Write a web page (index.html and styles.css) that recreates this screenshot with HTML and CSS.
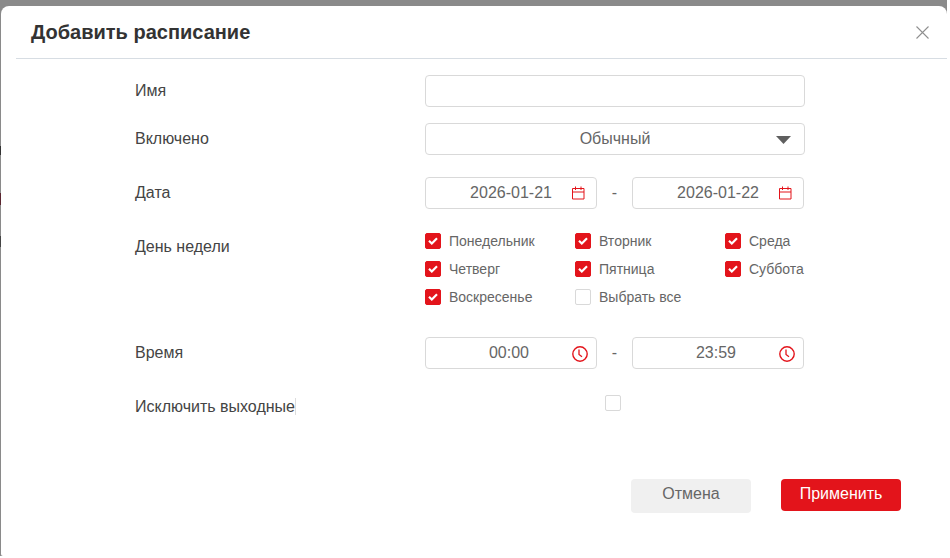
FILE: index.html
```html
<!DOCTYPE html>
<html lang="ru">
<head>
<meta charset="utf-8">
<title>Добавить расписание</title>
<link rel="stylesheet" href="styles.css">
</head>
<body>
<div class="page">
  <span class="peek peek-a"></span>
  <span class="peek peek-b"></span>
  <span class="peek peek-c"></span>
  <section class="dialog">
    <header class="dialog-head">
      <h1 class="dialog-title">Добавить расписание</h1>
      <svg class="close" width="13" height="13" viewBox="0 0 13 13"><path d="M.5.5l12 12M12.5.5l-12 12" stroke="#8f8f8f" stroke-width="1.1" fill="none"/></svg>
    </header>
    <div class="form">
      <div class="row row-name">
        <label class="label">Имя</label>
        <div class="control"><div class="field field-full"></div></div>
      </div>
      <div class="row row-enabled">
        <label class="label">Включено</label>
        <div class="control">
          <div class="field field-full field-select">
            <span class="value">Обычный</span>
            <svg class="caret" width="15" height="8" viewBox="0 0 15 8"><path d="M0 0h15L7.500 8z" fill="#5f5f5f"/></svg>
          </div>
        </div>
      </div>
      <div class="row row-date">
        <label class="label">Дата</label>
        <div class="control pair">
          <div class="field field-half">
            <span class="value">2026-01-21</span>
            <svg class="icon" width="14" height="14" viewBox="0 0 14 14"><path d="M1.500 2.500h11.500v10.500h-11.500zM1.500 6h11.500M4.500 .5v3.500M10 .5v3.500" stroke="#e3141b" fill="none"/></svg>
          </div>
          <span class="dash">-</span>
          <div class="field field-half">
            <span class="value">2026-01-22</span>
            <svg class="icon" width="14" height="14" viewBox="0 0 14 14"><path d="M1.500 2.500h11.500v10.500h-11.500zM1.500 6h11.500M4.500 .5v3.500M10 .5v3.500" stroke="#e3141b" fill="none"/></svg>
          </div>
        </div>
      </div>
      <div class="row row-days">
        <label class="label label-days">День недели</label>
        <div class="control days">
          <div class="day"><span class="check on"><svg width="10" height="8" viewBox="0 0 10 8"><path d="M1 3.800l2.800 2.700L9 1.300" stroke="#fff" stroke-width="2.200" fill="none"/></svg></span>Понедельник</div>
          <div class="day"><span class="check on"><svg width="10" height="8" viewBox="0 0 10 8"><path d="M1 3.800l2.800 2.700L9 1.300" stroke="#fff" stroke-width="2.200" fill="none"/></svg></span>Вторник</div>
          <div class="day"><span class="check on"><svg width="10" height="8" viewBox="0 0 10 8"><path d="M1 3.800l2.800 2.700L9 1.300" stroke="#fff" stroke-width="2.200" fill="none"/></svg></span>Среда</div>
          <div class="day"><span class="check on"><svg width="10" height="8" viewBox="0 0 10 8"><path d="M1 3.800l2.800 2.700L9 1.300" stroke="#fff" stroke-width="2.200" fill="none"/></svg></span>Четверг</div>
          <div class="day"><span class="check on"><svg width="10" height="8" viewBox="0 0 10 8"><path d="M1 3.800l2.800 2.700L9 1.300" stroke="#fff" stroke-width="2.200" fill="none"/></svg></span>Пятница</div>
          <div class="day"><span class="check on"><svg width="10" height="8" viewBox="0 0 10 8"><path d="M1 3.800l2.800 2.700L9 1.300" stroke="#fff" stroke-width="2.200" fill="none"/></svg></span>Суббота</div>
          <div class="day"><span class="check on"><svg width="10" height="8" viewBox="0 0 10 8"><path d="M1 3.800l2.800 2.700L9 1.300" stroke="#fff" stroke-width="2.200" fill="none"/></svg></span>Воскресенье</div>
          <div class="day"><span class="check"></span>Выбрать все</div>
        </div>
      </div>
      <div class="row row-time">
        <label class="label">Время</label>
        <div class="control pair pair-time">
          <div class="field field-half">
            <span class="value">00:00</span>
            <svg class="icon icon-clock" width="16" height="16" viewBox="0 0 16 16"><circle cx="8" cy="8" r="7.200" stroke="#e3141b" stroke-width="1.400" fill="none"/><path d="M7 3.500v5l3 2.200" stroke="#e3141b" stroke-width="1.300" fill="none"/></svg>
          </div>
          <span class="dash">-</span>
          <div class="field field-half">
            <span class="value">23:59</span>
            <svg class="icon icon-clock" width="16" height="16" viewBox="0 0 16 16"><circle cx="8" cy="8" r="7.200" stroke="#e3141b" stroke-width="1.400" fill="none"/><path d="M7 3.500v5l3 2.200" stroke="#e3141b" stroke-width="1.300" fill="none"/></svg>
          </div>
        </div>
      </div>
      <div class="row row-exclude">
        <label class="label"><span class="label-mark">Исключить выходные</span></label>
        <div class="control exclude"><span class="check"></span></div>
      </div>
    </div>
    <footer class="dialog-foot">
      <button class="btn btn-cancel" type="button">Отмена</button>
      <button class="btn btn-apply" type="button">Применить</button>
    </footer>
  </section>
</div>
</body>
</html>
```
FILE: styles.css
```css
* { box-sizing: border-box; }
html, body { margin: 0; padding: 0; }
body {
  width: 950px;
  height: 558px;
  overflow: hidden;
  background: #fff;
  font-family: "Liberation Sans", Arial, sans-serif;
}
.page {
  position: relative;
  width: 947px;
  height: 556px;
  padding: 6px 0 0 1px;
  background: #8a8a8a;
  overflow: hidden;
}
.peek { position: absolute; left: 0; width: 1px; }
.peek-a { top: 146px; height: 9px; background: #333; }
.peek-b { top: 193px; height: 12px; background: #5a2630; }
.peek-c { top: 236px; height: 11px; background: #444; }
.dialog {
  width: 946px;
  height: 550px;
  background: #fff;
  border-radius: 8px 8px 0 2px;
  display: flex;
  flex-direction: column;
}
.dialog-head {
  height: 53px;
  margin: 0 0 0 15px;
  padding: 0 18px 0 15px;
  border-bottom: 1px solid #d7dde3;
  display: flex;
  align-items: center;
  justify-content: space-between;
}
.dialog-title {
  margin: 0;
  font-size: 20px;
  font-weight: 700;
  color: #333;
}
.form { padding: 16px 0 0 134px; }
.row { display: flex; }
.label {
  width: 290px;
  flex: none;
  font-size: 16px;
  line-height: 32px;
  color: #444;
  white-space: nowrap;
}
.label-days { padding-top: 6px; }
.label-mark { border-right: 1px solid #dcdcdc; }
.control { width: 380px; flex: none; }
.row-enabled { margin-top: 16px; }
.row-date { margin-top: 22px; }
.row-days { margin-top: 16px; }
.row-time { margin-top: 26px; }
.row-exclude { margin-top: 22px; }
.field {
  height: 32px;
  border: 1px solid #d9d9d9;
  border-radius: 4px;
  background: #fff;
  font-size: 16px;
  color: #666;
  position: relative;
  display: flex;
  align-items: center;
  justify-content: center;
}
.field-full { width: 380px; }
.field-half { width: 172px; }
.pair-time .value { position: relative; left: -2px; }
.caret { position: absolute; right: 13px; top: 12px; }
.icon { position: absolute; right: 11px; top: 8px; }
.icon-clock { right: 8px; top: 8px; }
.pair { display: flex; align-items: center; }
.dash {
  width: 35px;
  text-align: center;
  font-size: 16px;
  color: #666;
}
.days {
  display: grid;
  grid-template-columns: 150px 150px 80px;
  grid-auto-rows: 28px;
  padding-top: 2px;
}
.day {
  display: flex;
  align-items: center;
  gap: 8px;
  font-size: 14px;
  color: #666;
  white-space: nowrap;
}
.check {
  width: 16px;
  height: 16px;
  flex: none;
  border: 1px solid #d9d9d9;
  border-radius: 2px;
  background: #fff;
  display: flex;
  align-items: center;
  justify-content: center;
}
.check.on { background: #e3141b; border-color: #e3141b; }
.exclude { padding: 4px 0 0 180px; }
.dialog-foot {
  margin-top: 56px;
  padding-left: 630px;
  display: flex;
  gap: 30px;
  align-items: flex-start;
}
.btn {
  width: 120px;
  border: 0;
  border-radius: 4px;
  font-family: inherit;
  font-size: 16px;
  padding: 0;
}
.btn-cancel { height: 34px; padding-bottom: 4px; background: #f0f0f0; color: #666; }
.btn-apply { height: 32px; padding-bottom: 2px; background: #e3141b; color: #fff; }
```
